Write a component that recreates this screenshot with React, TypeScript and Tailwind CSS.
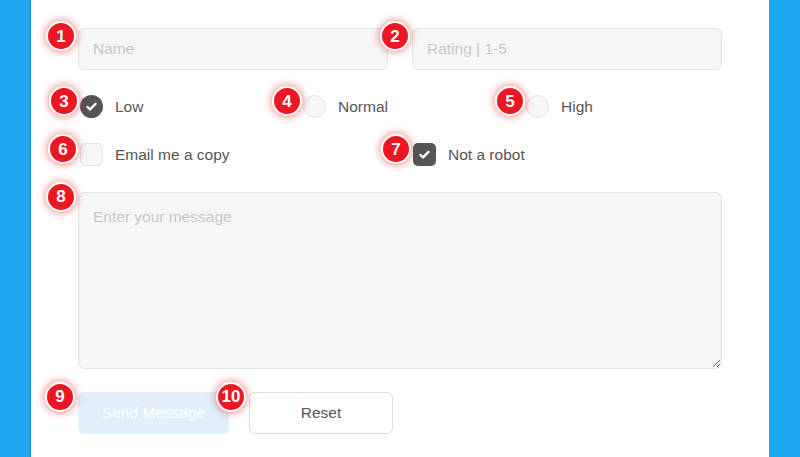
import { ReactNode } from 'react';

// numbered red marker that sits over the top-left corner of a field
const Badge = ({ n, className }: { n: number; className: string }) => (
  <span
    className={`absolute z-10 flex h-[30px] w-[30px] items-center justify-center rounded-full border-2 border-white bg-[#ee1620] text-[17px] font-bold leading-none text-white shadow-[0_0_7px_2px_rgba(236,28,36,0.4)] ${className}`}
  >
    {n}
  </span>
);

const Check = () => (
  <svg viewBox="0 0 16 16" className="h-[13px] w-[13px]" fill="none">
    <path d="M3 8.6l3.2 3L13 4.8" stroke="#fff" strokeWidth="2.8" strokeLinecap="round" strokeLinejoin="round" />
  </svg>
);

const Radio = ({ n, label, checked }: { n: number; label: string; checked?: boolean }) => (
  <label className="relative flex w-[223px] items-center gap-3">
    <Badge n={n} className="-left-[31px] -top-[9px]" />
    <span
      className={`flex h-[23px] w-[23px] items-center justify-center rounded-full ${
        checked ? 'bg-[#555555]' : 'border border-[#e4e4e4] bg-[#f6f6f6]'
      }`}
    >
      {checked && <Check />}
    </span>
    <span>{label}</span>
  </label>
);

const CheckBox = ({ n, label, checked, className = '' }: { n: number; label: string; checked?: boolean; className?: string }) => (
  <label className={`relative flex items-center gap-3 ${className}`}>
    <Badge n={n} className="-left-[32px] -top-[9px]" />
    <span
      className={`flex h-[23px] w-[23px] items-center justify-center rounded-[5px] ${
        checked ? 'bg-[#555555]' : 'border border-[#e4e4e4] bg-[#f6f6f6]'
      }`}
    >
      {checked && <Check />}
    </span>
    <span>{label}</span>
  </label>
);

const Field = ({ n, children, badge, className = '' }: { n: number; children: ReactNode; badge: string; className?: string }) => (
  <div className={`relative ${className}`}>
    <Badge n={n} className={badge} />
    {children}
  </div>
);

export default function App() {
  const inputCls =
    'h-[42px] w-[310px] rounded-[6px] border border-[#e3e3e3] bg-[#f6f6f6] px-[14px] text-[15.5px] text-[#555] placeholder:text-[#c8c8c8] outline-none';

  return (
    <div
      className="flex h-[457px] w-[800px] overflow-hidden bg-[#1ea8f0] text-[15.5px] text-[#555]"
      style={{ fontFamily: '"Helvetica Neue", "Liberation Sans", Arial, sans-serif' }}
    >
      <div className="w-[31px] border-r border-[#1b97d8]" />
      <div className="flex w-[738px] flex-col bg-white pl-[47px] pt-[28px]">
        <div className="flex w-[644px] gap-[24px]">
          <Field n={1} badge="-left-[32px] -top-[7px]">
            <input className={inputCls} placeholder="Name" />
          </Field>
          <Field n={2} badge="-left-[32px] -top-[7px]">
            <input className={inputCls} placeholder="Rating | 1-5" />
          </Field>
        </div>

        <div className="mt-[25px] flex pl-[2px]">
          <Radio n={3} label="Low" checked />
          <Radio n={4} label="Normal" />
          <Radio n={5} label="High" />
        </div>

        <div className="mt-[25px] flex pl-[2px]">
          <CheckBox n={6} label="Email me a copy" className="w-[333px]" />
          <CheckBox n={7} label="Not a robot" checked />
        </div>

        <Field n={8} badge="-left-[32px] -top-[10px]" className="mt-[25px]">
          <textarea
            className="block h-[177px] w-[644px] rounded-[6px] border border-[#e3e3e3] bg-[#f6f6f6] px-[14px] py-[12px] text-[15.5px] text-[#555] placeholder:text-[#c8c8c8] outline-none"
            placeholder="Enter your message"
          />
        </Field>

        <div className="mt-[23px] flex gap-[20px]">
          <Field n={9} badge="-left-[33px] -top-[10px]">
            <button className="h-[42px] w-[151px] rounded-[6px] bg-[#e1f0fb] text-[15.5px] text-white">Send Message</button>
          </Field>
          <Field n={10} badge="-left-[33px] -top-[10px]">
            <button className="h-[42px] w-[144px] rounded-[6px] border border-[#dedede] bg-white text-[15.5px] text-[#555]">Reset</button>
          </Field>
        </div>
      </div>
    </div>
  );
}
